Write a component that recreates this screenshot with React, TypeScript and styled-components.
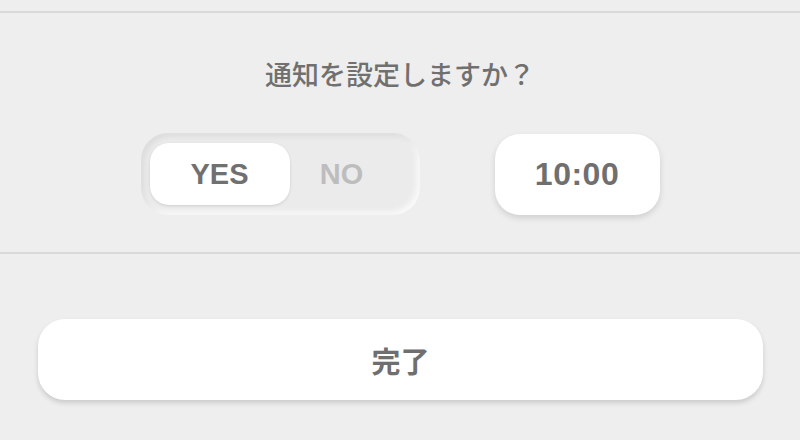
import React from "react";
import styled, { createGlobalStyle } from "styled-components";

const Global = createGlobalStyle`
  html, body { margin: 0; padding: 0; background: #eeeeee; }
  body { font-family: "Noto Sans CJK JP", "Liberation Sans", sans-serif; }
`;

const Page = styled.div`
  width: 800px;
  height: 440px;
  background: #eeeeee;
  display: flex;
  flex-direction: column;
  overflow: hidden;
`;

const TopGap = styled.div`
  height: 11px;
`;

const Divider = styled.div`
  height: 2px;
  background: #d9d9d9;
`;

const Section = styled.section`
  display: flex;
  flex-direction: column;
  align-items: center;
  padding: 43px 0 37px;
`;

const Title = styled.h2`
  margin: 0;
  font-family: "Noto Sans CJK JP", sans-serif;
  font-weight: 500;
  font-size: 27px;
  line-height: 36px;
  color: #707070;
`;

const ControlsRow = styled.div`
  margin-top: 41px;
  display: flex;
  align-items: center;
  gap: 75px;
`;

const Toggle = styled.div`
  width: 279px;
  height: 82px;
  box-sizing: border-box;
  padding: 10px 9px;
  border-radius: 27px;
  background: #ebebeb;
  box-shadow: inset 3px 3px 6px rgba(0, 0, 0, 0.07),
    inset -3px -3px 6px rgba(255, 255, 255, 0.8);
  display: flex;
  align-items: stretch;
`;

const Segment = styled.div<{ $active?: boolean; $w: number }>`
  width: ${(p) => p.$w}px;
  display: flex;
  align-items: center;
  justify-content: center;
  border-radius: 19px;
  font-family: "Liberation Sans", Arial, sans-serif;
  font-weight: 700;
  font-size: 29px;
  color: ${(p) => (p.$active ? "#707070" : "#bdbdbd")};
  background: ${(p) => (p.$active ? "#ffffff" : "transparent")};
  box-shadow: ${(p) => (p.$active ? "0 1px 3px rgba(0,0,0,0.12)" : "none")};
`;

const TimeButton = styled.button`
  width: 165px;
  height: 81px;
  border: none;
  border-radius: 25px;
  background: #ffffff;
  box-shadow: 0 3px 6px rgba(0, 0, 0, 0.13);
  font-family: "Liberation Sans", Arial, sans-serif;
  font-weight: 700;
  font-size: 32px;
  letter-spacing: 0.5px;
  color: #6f6f6f;
  padding: 0;
`;

const Bottom = styled.div`
  padding: 65px 37px 0 38px;
`;

const DoneButton = styled.button`
  width: 100%;
  height: 81px;
  border: none;
  border-radius: 27px;
  background: #ffffff;
  box-shadow: 0 3px 5px rgba(0, 0, 0, 0.15);
  font-family: "Noto Sans CJK JP", sans-serif;
  font-weight: 700;
  font-size: 29px;
  color: #6f6f6f;
  padding: 0;
`;

export default function App() {
  return (
    <Page>
      <Global />
      <TopGap />
      <Divider />
      <Section>
        <Title>通知を設定しますか？</Title>
        <ControlsRow>
          <Toggle>
            <Segment $active $w={140}>YES</Segment>
            <Segment $w={104}>NO</Segment>
          </Toggle>
          <TimeButton>10:00</TimeButton>
        </ControlsRow>
      </Section>
      <Divider />
      <Bottom>
        <DoneButton>完了</DoneButton>
      </Bottom>
    </Page>
  );
}
